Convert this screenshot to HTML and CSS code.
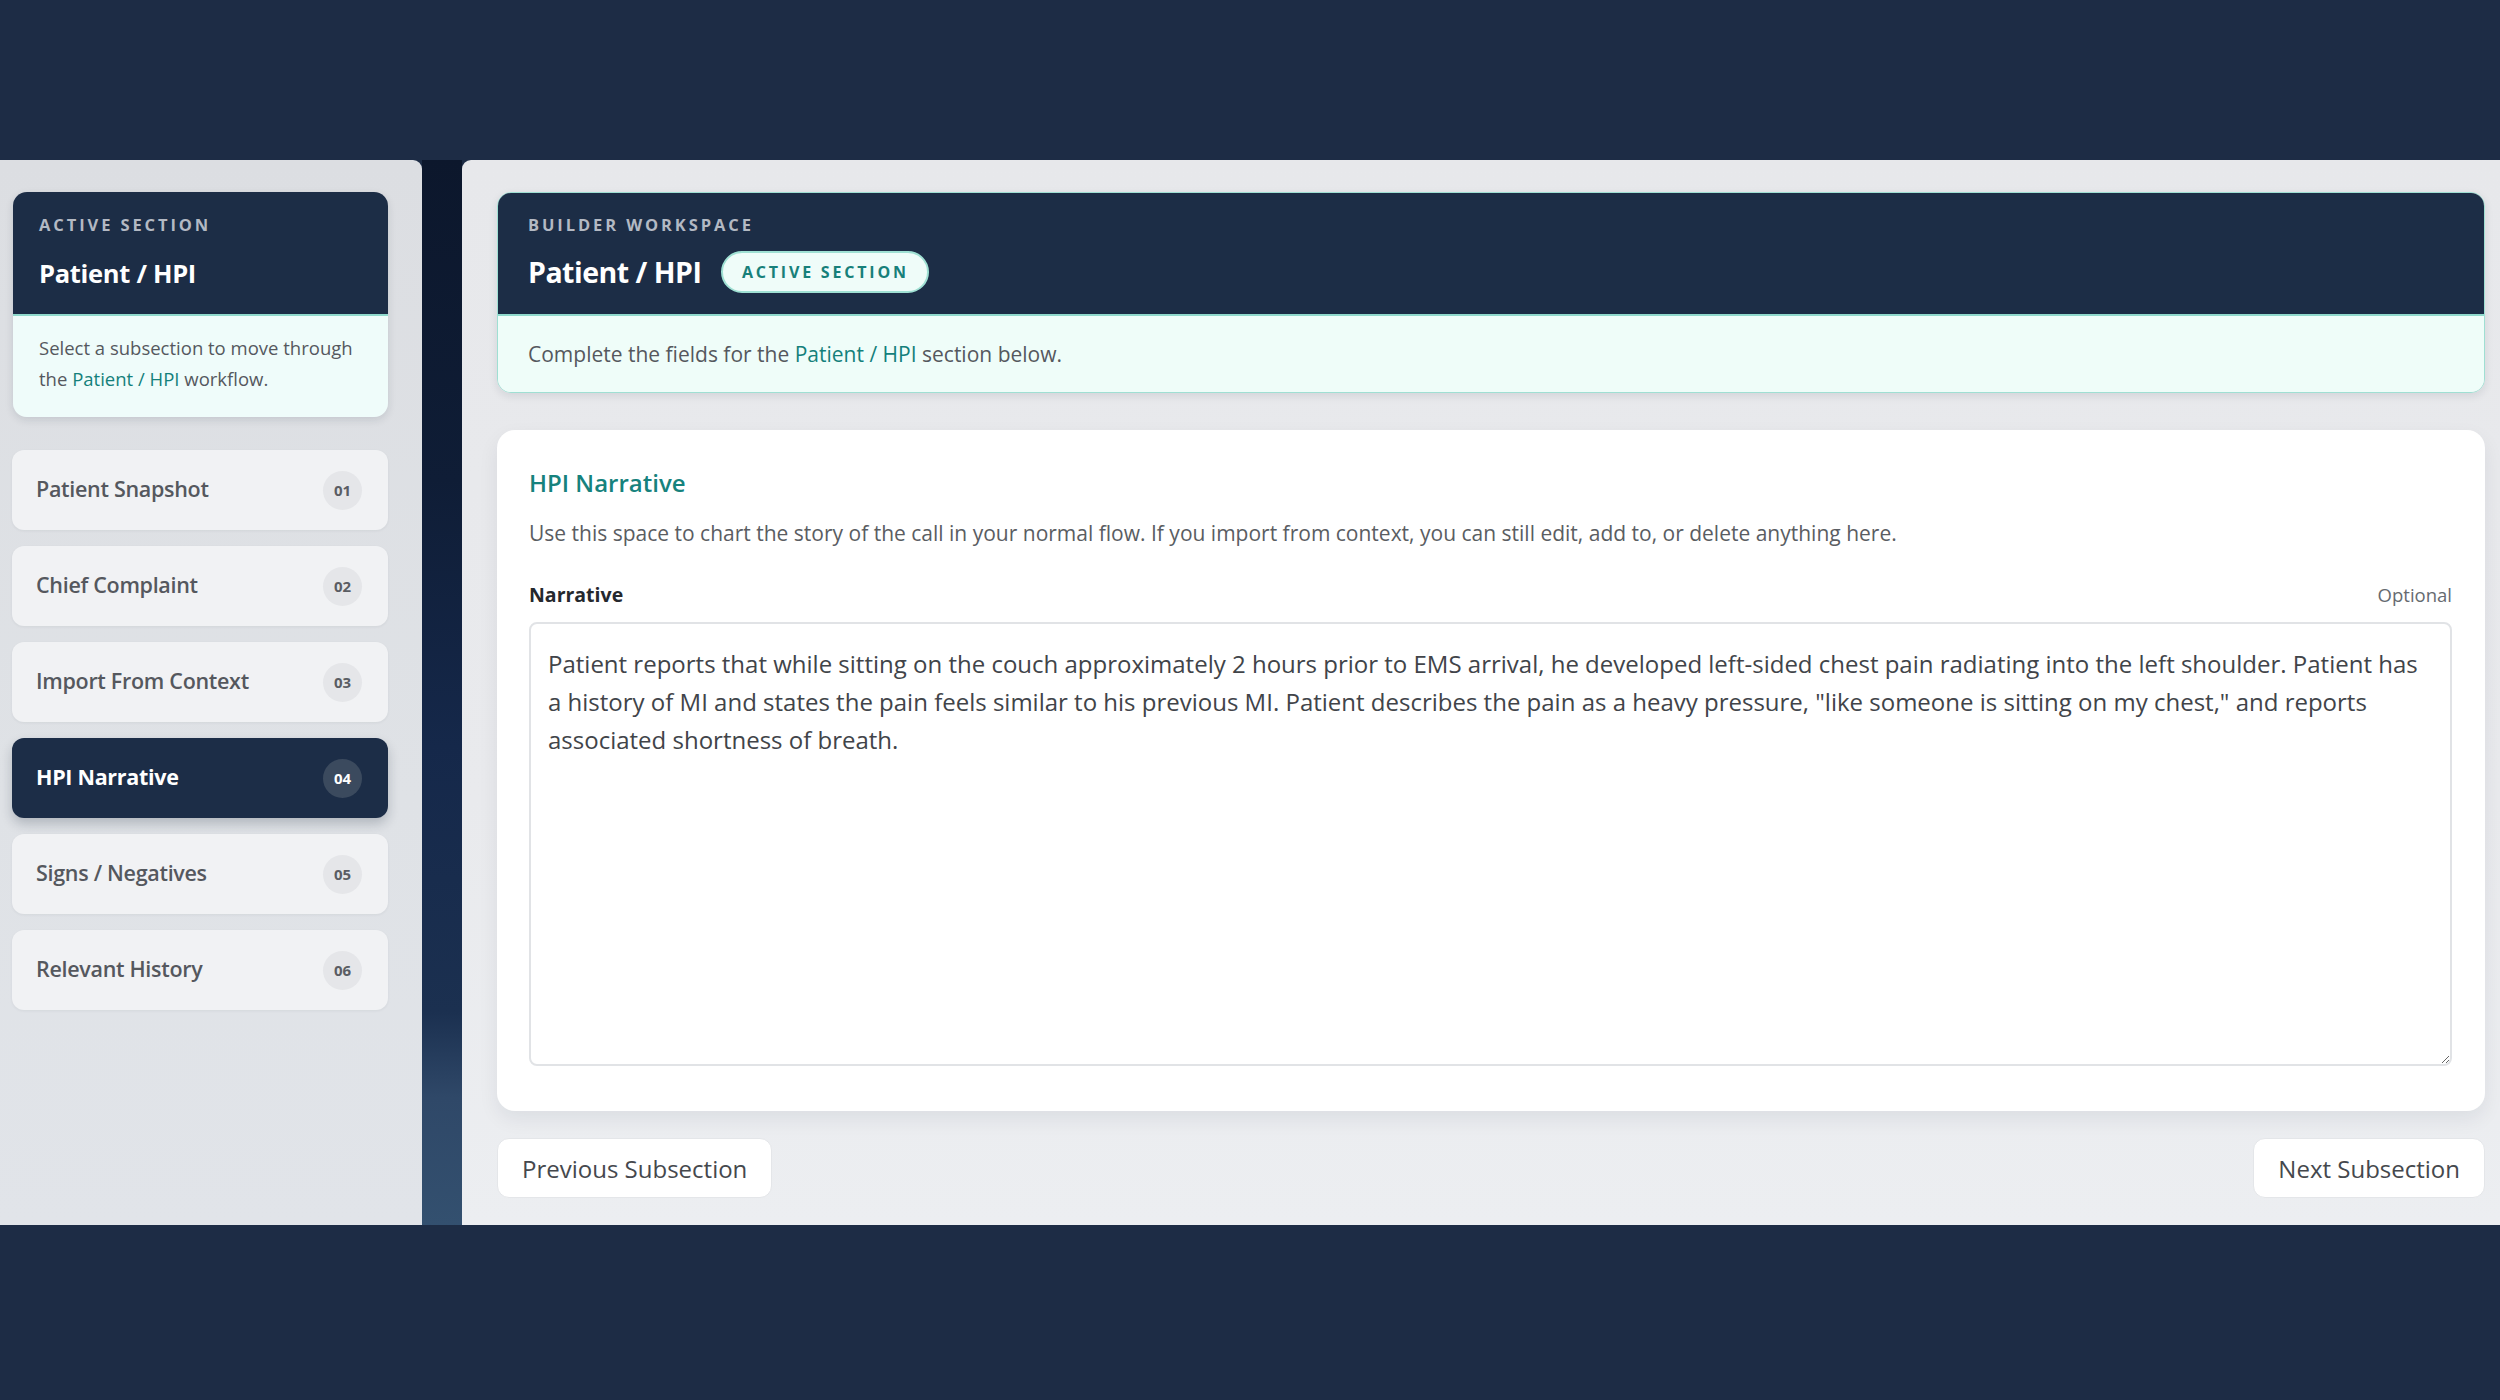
FILE: index.html
```html
<!DOCTYPE html>
<html lang="en">

<head>
    <meta charset="UTF-8">
    <meta name="viewport" content="width=device-width, initial-scale=1.0">
    <title>HPI Builder</title>
    <link rel="stylesheet" href="styles.css">
</head>

<body>
    <div class="app">
        <!-- left column: current section + subsection list -->
        <aside class="sidebar">
            <div class="section-card">
                <div class="section-card-head">
                    <div class="eyebrow">Active Section</div>
                    <div class="section-title">Patient / HPI</div>
                </div>
                <div class="section-card-body">
                    <p>Select a subsection to move through<br>the <span class="hl">Patient / HPI</span> workflow.</p>
                </div>
            </div>
            <ul class="sub-nav">
                <li><span>Patient Snapshot</span><i>01</i></li>
                <li><span>Chief Complaint</span><i>02</i></li>
                <li><span>Import From Context</span><i>03</i></li>
                <li class="active"><span>HPI Narrative</span><i>04</i></li>
                <li><span>Signs / Negatives</span><i>05</i></li>
                <li><span>Relevant History</span><i>06</i></li>
            </ul>
        </aside>

        <div class="gutter"></div>

        <main class="workspace">
            <div class="ws-head">
                <div class="ws-head-top">
                    <div class="eyebrow">Builder Workspace</div>
                    <div class="ws-title-row">
                        <h1>Patient / HPI</h1>
                        <span class="pill">Active Section</span>
                    </div>
                </div>
                <div class="ws-head-note">
                    <p>Complete the fields for the <span class="hl">Patient / HPI</span> section below.</p>
                </div>
            </div>

            <section class="panel">
                <h2>HPI Narrative</h2>
                <p class="panel-desc">Use this space to chart the story of the call in your normal flow. If you import from context, you can still edit, add to, or delete anything here.</p>
                <div class="field-label">
                    <label for="narrative">Narrative</label>
                    <span>Optional</span>
                </div>
                <textarea id="narrative">Patient reports that while sitting on the couch approximately 2 hours prior to EMS arrival, he developed left-sided chest pain radiating into the left shoulder. Patient has a history of MI and states the pain feels similar to his previous MI. Patient describes the pain as a heavy pressure, "like someone is sitting on my chest," and reports associated shortness of breath.</textarea>
            </section>

            <div class="pager">
                <button>Previous Subsection</button>
                <button>Next Subsection</button>
            </div>
        </main>
    </div>
</body>

</html>
```

FILE: styles.css
```css
* {
    margin: 0;
    padding: 0;
    box-sizing: border-box;
}

li {
    list-style: none;
}

body {
    background-color: #1d2c45;
    font-family: "Open Sans", "Noto Sans", sans-serif;
    color: #4a4e55;
    padding-top: 160px;
    height: 1400px;
}

.app {
    display: flex;
    height: 1065px;
}

.hl {
    color: #14807b;
    font-weight: 500;
}

.eyebrow {
    font-size: 16.5px;
    font-weight: 700;
    letter-spacing: 2.9px;
    text-transform: uppercase;
    color: #b3b9c3;
    line-height: 22px;
}

/* sidebar */
.sidebar {
    width: 422px;
    padding: 32px 34px 0 13px;
    background: linear-gradient(180deg, #dcdee2 0%, #dfe2e6 60%, #e1e4e9 100%);
    border-top-right-radius: 9px;
}

.section-card {
    border-radius: 14px;
    overflow: hidden;
    box-shadow: 0 3px 8px rgba(20, 30, 50, 0.12);
}

.section-card-head {
    background-color: #1c2d46;
    height: 122px;
    padding: 22px 26px 0;
}

.section-title {
    margin-top: 21px;
    font-size: 25.5px;
    font-weight: 700;
    color: #fff;
    line-height: 32px;
    letter-spacing: -0.3px;
}

.section-card-body {
    background-color: #effcfa;
    border-top: 2px solid #8fd9cc;
    height: 103px;
    padding: 16px 12px 0 26px;
    font-size: 18.5px;
    line-height: 31px;
    color: #55585e;
}

.sub-nav {
    margin-top: 33px;
    margin-left: -1px;
    display: flex;
    flex-direction: column;
    gap: 16px;
}

.sub-nav li {
    height: 80px;
    display: flex;
    align-items: center;
    justify-content: space-between;
    padding: 0 26px 0 24px;
    background-color: #f1f2f4;
    border-radius: 12px;
    box-shadow: 0 1px 3px rgba(20, 30, 50, 0.06);
    font-size: 21.5px;
    font-weight: 600;
    color: #55585e;
    letter-spacing: -0.3px;
}

.sub-nav li span {
    margin-top: -4px;
}

.sub-nav i {
    font-style: normal;
    width: 39px;
    height: 39px;
    border-radius: 50%;
    background-color: #e5e6e9;
    display: flex;
    align-items: center;
    justify-content: center;
    font-size: 15px;
    font-weight: 700;
    color: #5a5d63;
    letter-spacing: 0;
}

.sub-nav li.active {
    background-color: #1c2d47;
    color: #fff;
    font-weight: 700;
    box-shadow: 0 6px 12px rgba(20, 30, 50, 0.22);
}

.sub-nav li.active i {
    background-color: #3b4a5e;
    color: #fff;
}

/* dark strip between the columns */
.gutter {
    width: 40px;
    background: linear-gradient(180deg, #0c172c 0%, #0f1d36 30%, #15284a 55%, #1b3050 80%, #2f4868 88%, #33506f 100%);
}

/* workspace */
.workspace {
    flex: 1;
    background: linear-gradient(180deg, #e7e8eb 0%, #e9eaed 60%, #eceef1 100%);
    border-top-left-radius: 9px;
    padding: 32px 15px 0 35px;
    display: flex;
    flex-direction: column;
}

.ws-head {
    border: 1px solid #9fdfd3;
    border-radius: 14px;
    overflow: hidden;
    box-shadow: 0 3px 8px rgba(20, 30, 50, 0.10);
}

.ws-head-top {
    background-color: #1c2d46;
    height: 121px;
    padding: 21px 30px 0;
}

.ws-title-row {
    margin-top: 15px;
    display: flex;
    align-items: center;
    height: 42px;
}

.ws-title-row h1 {
    font-size: 28.5px;
    font-weight: 700;
    color: #fff;
    letter-spacing: -0.5px;
}

.pill {
    margin-left: 20px;
    height: 42px;
    width: 208px;
    border: 2px solid #9fe0d3;
    border-radius: 21px;
    background-color: #effcf9;
    color: #17807a;
    font-size: 16px;
    font-weight: 700;
    letter-spacing: 2.8px;
    text-transform: uppercase;
    display: flex;
    align-items: center;
    justify-content: center;
}

.ws-head-note {
    background-color: #effdf9;
    border-top: 2px solid #8fd9cc;
    height: 78px;
    padding: 0 30px;
    display: flex;
    align-items: center;
    font-size: 21px;
    color: #55585e;
}

.panel {
    margin-top: 37px;
    background-color: #fff;
    border-radius: 18px;
    box-shadow: 0 8px 20px rgba(20, 30, 50, 0.07);
    padding: 38px 33px 45px 32px;
}

.panel h2 {
    font-size: 24px;
    font-weight: 600;
    color: #16827d;
    line-height: 30px;
}

.panel-desc {
    margin-top: 21px;
    font-size: 21px;
    line-height: 28px;
    color: #5a5d62;
}

.field-label {
    margin-top: 34px;
    display: flex;
    justify-content: space-between;
    align-items: baseline;
    line-height: 28px;
}

.field-label label {
    font-size: 19.5px;
    font-weight: 700;
    color: #25282d;
}

.field-label span {
    font-size: 18.5px;
    color: #666a70;
}

.panel textarea {
    display: block;
    width: 100%;
    height: 444px;
    margin-top: 13px;
    padding: 21px 17px 19px;
    border: 2px solid #e1e3e6;
    border-radius: 8px;
    font-family: "Open Sans", "Noto Sans", sans-serif;
    font-size: 24px;
    line-height: 38px;
    color: #414449;
    resize: vertical;
    outline: none;
}

.pager {
    margin-top: 27px;
    display: flex;
    justify-content: space-between;
}

.pager button {
    height: 60px;
    padding: 0 24px;
    background-color: #fff;
    border: 1px solid #e4e6e9;
    border-radius: 12px;
    font-family: "Open Sans", "Noto Sans", sans-serif;
    font-size: 24px;
    color: #45484d;
    cursor: pointer;
}
```
